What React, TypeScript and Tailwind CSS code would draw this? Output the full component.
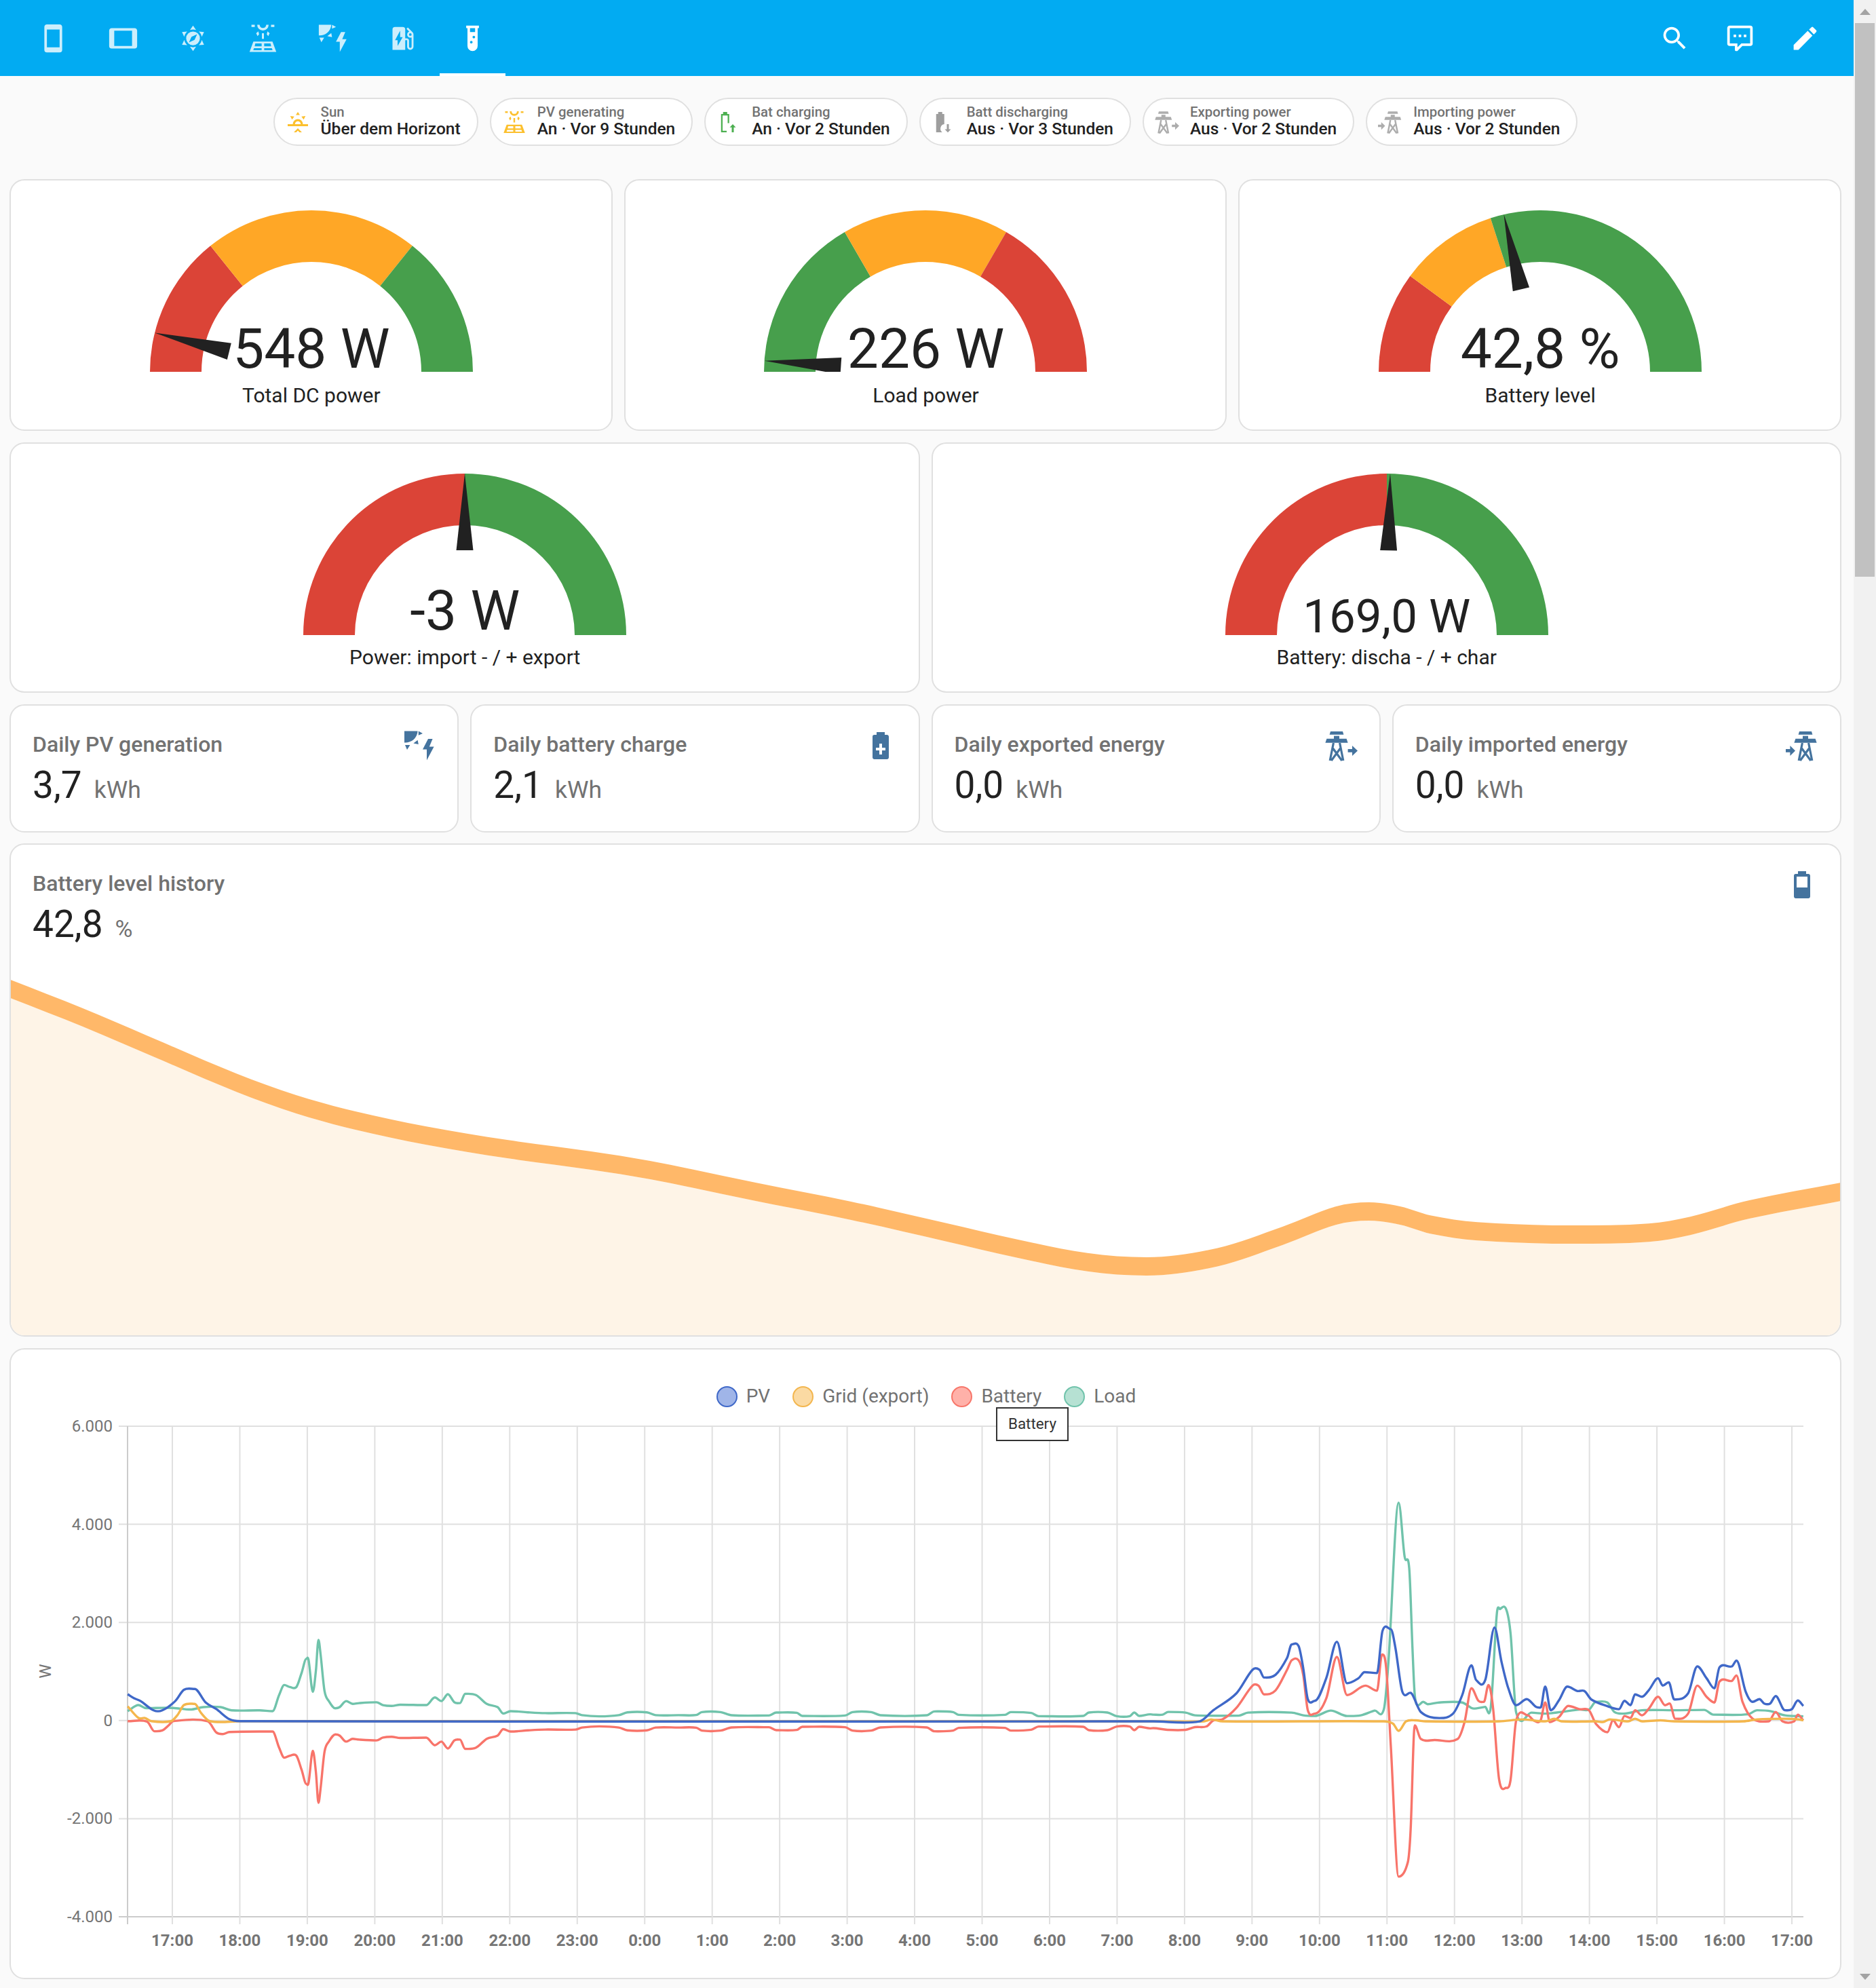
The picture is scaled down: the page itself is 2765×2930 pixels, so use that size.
import type { ReactNode } from 'react';

type Pt = number[];

const SUN_RAYS =
  'M12 2L14.39 5.42C13.65 5.15 12.84 5 12 5S10.35 5.15 9.61 5.42L12 2M3.34 7L7.5 6.65C6.9 7.16 6.36 7.78 5.94 8.5C5.5 9.24 5.25 10 5.11 10.79L3.34 7M3.36 17L5.12 13.23C5.26 14 5.53 14.78 5.95 15.5C6.37 16.24 6.91 16.86 7.5 17.37L3.36 17M20.65 7L18.88 10.79C18.74 10 18.47 9.23 18.05 8.5C17.63 7.78 17.1 7.15 16.5 6.64L20.65 7M20.64 17L16.5 17.36C17.09 16.85 17.62 16.22 18.04 15.5C18.46 14.77 18.73 14 18.87 13.21L20.64 17M12 22L9.59 18.56C10.33 18.83 11.14 19 12 19C12.82 19 13.63 18.83 14.37 18.56L12 22';
const PHONE = 'M17,19H7V5H17M17,1H7C5.89,1 5,1.89 5,3V21A2,2 0 0,0 7,23H17A2,2 0 0,0 19,21V3C19,1.89 18.1,1 17,1Z';
const TABLET = 'M19,18H5V6H19M21,4H3C1.89,4 1,4.89 1,6V18A2,2 0 0,0 3,20H21A2,2 0 0,0 23,18V6C23,4.89 22.1,4 21,4Z';
const COMPASS = `${SUN_RAYS}M12 6.6a5.4 5.4 0 1 0 0 10.8 5.4 5.4 0 0 0 0-10.8zM15.2 8.8L13.2 13.2 8.8 15.2 10.8 10.8z`;
const SOLAR =
  'M4.5 14.5h15L22.5 22.7H1.5zM6 16l-.5 2.2H11V16zM13 16v2.2h5.5L18 16zM5 19.7l-.6 1.6H11v-1.6zM13 19.7v1.6h6.6l-.6-1.6zM7.5 1.3a4.5 4.5 0 0 0 9 0h-1.9a2.6 2.6 0 0 1-5.2 0zM3 1.3h2.6v1.7H3zM18.4 1.3H21v1.7h-2.6zM11.2 8h1.6v4.4h-1.6zM6.7 8l1.7-1.5.6 2.3-1.2 1.5zM17.3 8l-1.7-1.5-.6 2.3 1.2 1.5z';
const SUN_BOLT =
  'M1 1.3h9.8a9 9 0 0 1-9.8 8.4zM11.4 1.3l3.1 1.7-3.1 1.4zM1.5 11.5h3.7L3 15zM10.8 7.9l.6 3.1-3.7-.8zM18.5 7L14.5 14.7h3v8L22.8 12.7h-3.4l2.4-5.7z';
const EV =
  'M19.77,7.23L19.78,7.22L16.06,3.5L15,4.56L17.11,6.67C16.17,7.03 15.5,7.93 15.5,9A2.5,2.5 0 0,0 18,11.5C18.36,11.5 18.69,11.42 19,11.29V18.5A1,1 0 0,1 18,19.5A1,1 0 0,1 17,18.5V14A2,2 0 0,0 15,12H14V5A2,2 0 0,0 12,3H6A2,2 0 0,0 4,5V21H14V13.5H15.5V18.5A2.5,2.5 0 0,0 18,21A2.5,2.5 0 0,0 20.5,18.5V9C20.5,8.31 20.22,7.68 19.77,7.23M18,10A1,1 0 0,1 17,9A1,1 0 0,1 18,8A1,1 0 0,1 19,9A1,1 0 0,1 18,10M8,18V13.5H6L10,6V11H12L8,18Z';
const TUBE =
  'M7,2V4H8V18A4,4 0 0,0 12,22A4,4 0 0,0 16,18V4H17V2H7M11,16C10.4,16 10,15.6 10,15C10,14.4 10.4,14 11,14C11.6,14 12,14.4 12,15C12,15.6 11.6,16 11,16M13,12C12.4,12 12,11.6 12,11C12,10.4 12.4,10 13,10C13.6,10 14,10.4 14,11C14,11.6 13.6,12 13,12M14,7H10V4H14V7Z';
const SEARCH =
  'M9.5,3A6.5,6.5 0 0,1 16,9.5C16,11.11 15.41,12.59 14.44,13.73L14.71,14H15.5L20.5,19L19,20.5L14,15.5V14.71L13.73,14.44C12.59,15.41 11.11,16 9.5,16A6.5,6.5 0 0,1 3,9.5A6.5,6.5 0 0,1 9.5,3M9.5,5C7,5 5,7 5,9.5C5,12 7,14 9.5,14C12,14 14,12 14,9.5C14,7 12,5 9.5,5Z';
const COMMENT =
  'M9,22A1,1 0 0,1 8,21V18H4A2,2 0 0,1 2,16V4C2,2.89 2.9,2 4,2H20A2,2 0 0,1 22,4V16A2,2 0 0,1 20,18H13.9L10.2,21.71C10,21.9 9.75,22 9.5,22V22H9M10,16V19.08L13.08,16H20V4H4V16H10M17,11H15V9H17V11M13,11H11V9H13V11M9,11H7V9H9V11Z';
const PENCIL =
  'M20.71,7.04C21.1,6.65 21.1,6 20.71,5.63L18.37,3.29C18,2.9 17.35,2.9 16.96,3.29L15.12,5.12L18.87,8.87M3,17.25V21H6.75L17.81,9.93L14.06,6.18L3,17.25Z';
const SUN_UP =
  'M12 2l2 3h-4zM4.5 6l4 .5-2.2 3zM19.5 6l-4 .5 2.2 3zM7 14a5 5 0 0 1 10 0h-2.2a2.8 2.8 0 0 0-5.6 0zM2 14h20v2H2zM12 18l4 4h-2.4L12 20.4 10.4 22H8z';
const BAT_SHELL = 'M16.67 4H15V2H9v2H7.33A1.33 1.33 0 0 0 6 5.33v15.34C6 21.4 6.6 22 7.33 22h9.34c.73 0 1.33-.6 1.33-1.33V5.33C18 4.6 17.4 4 16.67 4z';
const BAT_PLUS = `${BAT_SHELL}M11 10.5h2v3h2.5v2H13v3h-2v-3H8.5v-2H11z`;
const BAT_40 = `${BAT_SHELL}M8 6h8v8H8z`;
const BAT_CHARGE = 'M6.5 2h4v2h2v9h-1.5V5.5H6V20.5h4V22H4.5V4h2zM16 14l3 3.2h-2V22h-2v-4.8h-2z';
const BAT_DISCHARGE = 'M6.5 2h4v2h2v10a4.5 4.5 0 0 0-2 8H4.5V4h2zM15 14h2v5h2l-3 3.2-3-3.2h2z';

function Icon({ d, className }: { d: string; className: string }) {
  return (
    <svg viewBox="0 0 24 24" className={className} fill="currentColor" fillRule="evenodd">
      <path d={d} />
    </svg>
  );
}

function Tower({ importing, className }: { importing?: boolean; className: string }) {
  const dx = importing ? 4 : -2;
  return (
    <svg viewBox="0 0 24 24" className={className} fill="currentColor">
      <g transform={`translate(${dx} 0)`}>
        <path d="M6 1.5h9l.7 2.4H5.3z" />
        <path d="M8.5 4.8h4v3h-4z" />
        <path d="M3.2 6.9h14.6l1 3H2.2z" />
        <path d="M8.2 10L5.6 23M12.8 10l2.6 13M7.8 14l6.6 9M13.2 14L6.6 23" fill="none" stroke="currentColor" strokeWidth="1.6" />
      </g>
      {importing ? (
        <path d="M0 14.5h3.2v-2.5L7 15.7l-3.8 3.8v-2.6H0z" />
      ) : (
        <path d="M16.8 14.5H20V12l4 3.7-4 3.8v-2.6h-3.2z" />
      )}
    </svg>
  );
}

const tabs = [PHONE, TABLET, COMPASS, SOLAR, SUN_BOLT, EV, TUBE];

function Header() {
  return (
    <header className="flex h-[112px] items-center justify-between bg-[#02abf2] pl-[27px] pr-[24px] text-white">
      <div className="flex h-full">
        {tabs.map((d, i) => (
          <div key={i} className={`relative flex h-full w-[103px] items-center justify-center ${i === 6 ? 'text-white' : 'text-white/80'}`}>
            <Icon d={d} className="h-[45px] w-[45px]" />
            {i === 6 && <span className="absolute inset-x-[3px] bottom-0 h-1 bg-white" />}
          </div>
        ))}
      </div>
      <div className="flex">
        {[SEARCH, COMMENT, PENCIL].map((d) => (
          <div key={d} className="flex w-[96px] justify-center">
            <Icon d={d} className="h-[45px] w-[45px]" />
          </div>
        ))}
      </div>
    </header>
  );
}

function Chip({ icon, label, value }: { icon: ReactNode; label: string; value: string }) {
  return (
    <div className="flex h-[71px] items-center gap-[16px] rounded-full border-2 border-[#e0e0e0] bg-white pl-[16px] pr-[24px]">
      {icon}
      <div className="flex flex-col pb-[4px]">
        <span className="text-[20.4px] leading-[24px] font-medium text-[#727272]">{label}</span>
        <span className="text-[24.5px] leading-[26px] font-medium text-[#212121]">{value}</span>
      </div>
    </div>
  );
}

function ChipRow() {
  const ic = 'h-[36px] w-[36px] shrink-0';
  return (
    <div className="mb-[49px] flex justify-center gap-[17px]">
      <Chip icon={<Icon d={SUN_UP} className={`${ic} text-[#fcc02e]`} />} label="Sun" value="Über dem Horizont" />
      <Chip icon={<Icon d={SOLAR} className={`${ic} text-[#fcc02e]`} />} label="PV generating" value="An · Vor 9 Stunden" />
      <Chip icon={<Icon d={BAT_CHARGE} className={`${ic} text-[#4caf50]`} />} label="Bat charging" value="An · Vor 2 Stunden" />
      <Chip icon={<Icon d={BAT_DISCHARGE} className={`${ic} text-[#9e9e9e]`} />} label="Batt discharging" value="Aus · Vor 3 Stunden" />
      <Chip icon={<Tower className={`${ic} text-[#adadad]`} />} label="Exporting power" value="Aus · Vor 2 Stunden" />
      <Chip icon={<Tower importing className={`${ic} text-[#adadad]`} />} label="Importing power" value="Aus · Vor 2 Stunden" />
    </div>
  );
}

const RED = '#db4437';
const ORANGE = '#ffa726';
const GREEN = '#479f4c';

function polar(r: number, a: number): Pt {
  const t = (a * Math.PI) / 180;
  return [-r * Math.cos(t), -r * Math.sin(t)];
}

function sector(a0: number, a1: number) {
  const R = 238;
  const r = 162;
  const [x0, y0] = polar(R, a0);
  const [x1, y1] = polar(R, a1);
  const [x2, y2] = polar(r, a1);
  const [x3, y3] = polar(r, a0);
  return `M${x0} ${y0}A${R} ${R} 0 0 1 ${x1} ${y1}L${x2} ${y2}A${r} ${r} 0 0 0 ${x3} ${y3}Z`;
}

type GaugeProps = {
  value: string;
  label: string;
  angle: number;
  stops: [string, number, number][];
  textClass?: string;
  labelClass?: string;
};

function Gauge({ value, label, angle, stops, textClass = 'bottom-[-7px] text-[82px]', labelClass = 'mt-[17px]' }: GaugeProps) {
  const tip = polar(238, angle);
  const b1 = polar(125.5, angle - 5.7);
  const b2 = polar(125.5, angle + 5.7);
  return (
    <div className="flex h-full flex-col items-center rounded-[22px] border-2 border-[#e0e0e0] bg-white pl-[1px] pt-[44px]">
      <div className="relative h-[238px] w-[476px]">
        <svg viewBox="-238 -238 476 238" className="block h-[238px] w-[476px]">
          {stops.map(([c, a0, a1]) => (
            <path key={c + a0} d={sector(a0, a1)} fill={c} />
          ))}
          <polygon points={`${tip} ${b1} ${b2}`} fill="#212121" />
        </svg>
        <div className={`absolute inset-x-0 text-center leading-[82px] text-[#212121] ${textClass}`}>{value}</div>
      </div>
      <div className={`text-[30px] leading-[36px] text-[#212121] ${labelClass}`}>{label}</div>
    </div>
  );
}

function StatHead({ title, value, unit, icon }: { title: string; value: string; unit: string; icon: ReactNode }) {
  return (
    <div className="flex items-start justify-between pl-[32px] pr-[32px] pt-[39px]">
      <div>
        <div className="text-[32px] leading-[36px] font-medium text-[#727272]">{title}</div>
        <div className="mt-[12px] flex items-baseline gap-[18px] leading-[60px]">
          <span className="text-[55px] text-[#212121]">{value}</span>
          <span className="text-[35.5px] text-[#727272]">{unit}</span>
        </div>
      </div>
      {icon}
    </div>
  );
}

function StatCard(props: { title: string; value: string; unit: string; icon: ReactNode }) {
  return (
    <div className="h-full rounded-[22px] border-2 border-[#e0e0e0] bg-white">
      <StatHead {...props} />
    </div>
  );
}

// monotone cubic through the points, no overshoot at peaks
function smooth(p: Pt[]) {
  const slopes = p.map((b, i) => {
    const a = p[Math.max(i - 1, 0)];
    const c = p[Math.min(i + 1, p.length - 1)];
    const s0 = (b[1] - a[1]) / (b[0] - a[0] || 1);
    const s1 = (c[1] - b[1]) / (c[0] - b[0] || 1);
    if (s0 * s1 < 0) return 0;
    return (c[1] - a[1]) / (c[0] - a[0]);
  });
  let d = `M${p[0][0]} ${p[0][1]}`;
  for (let i = 0; i < p.length - 1; i++) {
    const [x0, y0] = p[i];
    const [x1, y1] = p[i + 1];
    const h = (x1 - x0) / 3;
    d += `C${x0 + h} ${y0 + slopes[i] * h} ${x1 - h} ${y1 - slopes[i + 1] * h} ${x1} ${y1}`;
  }
  return d;
}

// battery history outline, top edge
const historyTop: Pt[] = [
  [8, 115], [70, 230], [130, 350], [200, 490], [250, 575], [300, 640], [360, 700], [430, 755], [500, 800], [550, 838],
  [640, 925], [720, 1000], [800, 1085], [860, 1150], [920, 1205], [970, 1222], [1030, 1185], [1085, 1100], [1130, 1020],
  [1158, 1003], [1185, 1020], [1210, 1055], [1250, 1082], [1330, 1095], [1395, 1087], [1430, 1060], [1480, 995], [1557, 925],
].map(([x, y]) => [x / 0.574, 1400 + y / 2.703]);

function HistoryChart() {
  const bottom: Pt[] = historyTop.map(([x, y]) => [x, y + 27]);
  const first = historyTop[0];
  const last = bottom[bottom.length - 1];
  return (
    <svg viewBox="16 1407 2696 560" className="mt-auto block h-[560px] w-full">
      <path d={`${smooth(bottom)}L${last[0]} 1967L${first[0]} 1967Z`} fill="#fef4e7" />
      <path d={`${smooth(historyTop)}L${last[0]} ${last[1]}${smooth([...bottom].reverse()).replace(/^M[^C]+/, '')}Z`} fill="#ffb869" />
    </svg>
  );
}

const z7 = (p: Pt[]) => p.map(([x, y]) => [x / 1.568, 2000 + y / 1.686]);
const z8 = (p: Pt[]) => p.map(([x, y]) => [1700 + x / 1.472, 2150 + y / 2.01]);
const z11 = (p: Pt[]) => p.map(([x, y]) => [900 + x / 1.823, 2460 + y / 3]);

const loadLine: Pt[] = [
  ...z7([[295, 880], [320, 865], [335, 872], [360, 872], [400, 872], [440, 876], [470, 870], [510, 870], [535, 878], [600, 878], [630, 880], [645, 840], [657, 815], [670, 820], [685, 820], [697, 785], [708, 750], [713, 752], [723, 832], [730, 780], [736, 703], [741, 740], [750, 830], [760, 855], [775, 873], [785, 870], [800, 855], [815, 862], [830, 860], [870, 858], [885, 865], [905, 867], [925, 864], [985, 865], [1005, 846], [1020, 855], [1035, 838], [1050, 858], [1063, 860], [1075, 837], [1100, 840], [1125, 862], [1150, 870], [1163, 886], [1180, 880], [1220, 883], [1260, 885], [1330, 885], [1345, 890], [1385, 893], [1430, 890], [1450, 883], [1495, 883], [1515, 890], [1568, 890]]),
  ...z11([[230, 203], [245, 190], [295, 190], [325, 204], [425, 205], [445, 192], [500, 193], [515, 207], [630, 205], [650, 190], [700, 190], [725, 204], [850, 204], [870, 187], [920, 190], [935, 202], [1060, 202], [1075, 190], [1130, 194], [1150, 208], [1270, 207], [1285, 192], [1335, 192], [1360, 208], [1395, 208], [1407, 192], [1420, 207], [1450, 200]]),
  ...z8([[0, 758], [20, 758], [32, 750], [70, 752], [90, 760], [185, 761], [205, 752], [300, 752], [325, 760], [350, 762], [385, 746], [420, 762], [450, 760], [480, 746], [500, 742], [510, 600], [532, 130], [545, 290], [555, 325], [562, 560], [567, 700], [575, 730], [585, 720], [595, 727], [620, 722], [670, 722], [695, 740], [720, 735], [732, 735], [745, 460], [752, 445], [765, 445], [775, 520], [787, 752], [820, 752], [850, 755], [885, 750], [925, 743], [945, 743], [960, 720], [985, 722], [1000, 750], [1020, 755], [1060, 745], [1130, 745], [1195, 744], [1215, 758], [1290, 757], [1310, 745], [1340, 748], [1370, 760], [1410, 763]]),
];

const batteryLine: Pt[] = [
  ...z7([[295, 905], [340, 906], [357, 930], [375, 928], [390, 915], [400, 905], [480, 905], [500, 933], [515, 937], [530, 932]]),
  ...loadLine.filter(([x]) => x >= 400 && x < 1700).map(([x, y]) => [x, 2 * 2537 - y]),
  ...z8([[0, 798], [30, 803], [70, 803], [90, 795], [115, 793], [130, 775], [150, 772], [180, 738], [215, 672], [228, 672], [240, 698], [265, 686], [290, 625], [300, 597], [315, 597], [325, 640], [335, 745], [350, 755], [375, 710], [398, 587], [420, 700], [460, 672], [485, 687], [496, 580], [505, 620], [515, 850], [532, 1238], [552, 1195], [558, 1100], [567, 790], [580, 830], [610, 833], [660, 830], [675, 780], [690, 680], [705, 717], [717, 720], [727, 670], [737, 740], [750, 950], [765, 975], [775, 950], [787, 775], [812, 760], [825, 775], [840, 775], [850, 722], [860, 780], [880, 765], [900, 732], [925, 742], [945, 745], [960, 785], [985, 810], [997, 775], [1010, 795], [1022, 762], [1035, 768], [1045, 745], [1060, 760], [1075, 740], [1095, 705], [1110, 730], [1120, 725], [1132, 770], [1160, 755], [1180, 672], [1200, 705], [1217, 722], [1228, 660], [1255, 658], [1265, 642], [1278, 720], [1300, 770], [1335, 778], [1350, 750], [1365, 778], [1390, 778], [1398, 758], [1410, 775]]),
];

const gridLine: Pt[] = [
  ...z7([[295, 868], [320, 897], [335, 897], [350, 905], [395, 905], [410, 890], [425, 865], [450, 862], [465, 885], [485, 905], [555, 905]]),
  ...z8([[0, 778], [110, 778], [125, 772], [150, 778], [500, 778], [520, 785], [532, 806], [548, 778], [570, 775], [590, 778], [750, 778], [800, 772], [850, 778], [870, 770], [885, 778], [960, 778], [975, 780], [990, 772], [1030, 778], [1045, 770], [1060, 778], [1100, 775], [1130, 778], [1280, 778], [1310, 772], [1370, 770], [1400, 772], [1410, 775]]),
];

const pvLine: Pt[] = [
  ...z7([[295, 838], [310, 848], [325, 855], [355, 878], [375, 878], [405, 855], [425, 827], [450, 825], [475, 858], [500, 875], [530, 900], [555, 905]]),
  ...z8([[0, 778], [100, 778], [130, 745], [180, 695], [215, 625], [230, 625], [240, 648], [265, 640], [290, 590], [300, 550], [315, 555], [325, 620], [335, 712], [350, 717], [375, 650], [398, 542], [420, 665], [445, 650], [458, 632], [485, 635], [497, 510], [515, 505], [525, 560], [540, 690], [560, 695], [580, 750], [620, 768], [650, 755], [670, 700], [690, 612], [700, 655], [720, 655], [740, 500], [755, 600], [770, 680], [787, 730], [810, 712], [830, 735], [840, 737], [850, 675], [862, 745], [880, 715], [898, 675], [920, 688], [935, 688], [950, 713], [985, 733], [1010, 742], [1022, 717], [1035, 730], [1045, 698], [1060, 705], [1075, 685], [1095, 650], [1105, 672], [1118, 662], [1130, 713], [1160, 695], [1180, 615], [1200, 650], [1217, 680], [1228, 618], [1255, 615], [1265, 598], [1285, 690], [1300, 720], [1315, 712], [1325, 725], [1338, 725], [1350, 703], [1370, 745], [1385, 742], [1398, 716], [1410, 732]]),
];

const legend = [
  { name: 'PV', fill: '#a0b5e8', stroke: '#3f68c8' },
  { name: 'Grid (export)', fill: '#fbdaa3', stroke: '#f3b64e' },
  { name: 'Battery', fill: '#ffb1a9', stroke: '#f7766a' },
  { name: 'Load', fill: '#b6e1d3', stroke: '#70c3ab' },
];

const hours = ['17:00', '18:00', '19:00', '20:00', '21:00', '22:00', '23:00', '0:00', '1:00', '2:00', '3:00', '4:00', '5:00', '6:00', '7:00', '8:00', '9:00', '10:00', '11:00', '12:00', '13:00', '14:00', '15:00', '16:00', '17:00'];
const yTicks = ['6.000', '4.000', '2.000', '0', '-2.000', '-4.000'];

function PowerChart() {
  return (
    <svg viewBox="16 2080 2696 833" className="block h-[833px] w-full font-['Roboto']">
      {yTicks.map((t, i) => {
        const y = 2102 + i * 144.6;
        return (
          <g key={t}>
            <line x1="175" x2="2658" y1={y} y2={y} stroke={i === 5 ? '#cccccc' : '#e0e0e0'} strokeWidth="2" />
            <text x="166" y={y + 8} textAnchor="end" fontSize="24" fill="#757575">{t}</text>
          </g>
        );
      })}
      <line x1="188" x2="188" y1="2102" y2="2836" stroke="#cccccc" strokeWidth="2" />
      {hours.map((h, i) => {
        const x = 254 + i * 99.46;
        return (
          <g key={i}>
            <line x1={x} x2={x} y1="2102" y2="2836" stroke="#e0e0e0" strokeWidth="2" />
            <text x={x} y="2868" textAnchor="middle" fontSize="24" fontWeight="700" fill="#757575">{h}</text>
          </g>
        );
      })}
      <text x="0" y="0" transform="translate(75 2463) rotate(-90)" textAnchor="middle" fontSize="24" fill="#757575">W</text>
      <g fill="none" strokeWidth="3.4" strokeLinejoin="round">
        <path d={smooth(loadLine)} stroke="#70c3ab" />
        <path d={smooth(batteryLine)} stroke="#f8746a" />
        <path d={smooth(gridLine)} stroke="#f4b64c" />
        <path d={smooth(pvLine)} stroke="#3f68c8" />
      </g>
    </svg>
  );
}

function Scrollbar() {
  return (
    <div className="flex h-full w-[33px] flex-col bg-[#f1f1f1]">
      <div className="flex h-[34px] items-center justify-center">
        <svg viewBox="0 0 16 9" className="h-[9px] w-[16px]"><path d="M8 0l8 9H0z" fill="#a3a3a3" /></svg>
      </div>
      <div className="mx-[2px] h-[816px] bg-[#c1c1c1]" />
      <div className="mt-auto flex h-[34px] items-center justify-center">
        <svg viewBox="0 0 16 9" className="h-[9px] w-[16px]"><path d="M8 9l8-9H0z" fill="#a3a3a3" /></svg>
      </div>
    </div>
  );
}

const statIcon = 'mt-[-4px] h-[48px] w-[48px] shrink-0 text-[#44739e]';

export default function App() {
  return (
    <div className="flex h-[2930px] w-[2765px] overflow-hidden bg-[#fafafa] font-['Roboto',sans-serif]">
      <div className="flex w-[2732px] flex-col">
        <Header />
        <main className="pl-[14px] pr-[18px] pt-[32px]">
          <ChipRow />
          <div className="mb-[17px] grid h-[371px] grid-cols-3 gap-[17px]">
            <Gauge value="548 W" label="Total DC power" angle={14} stops={[[RED, 0, 51.3], [ORANGE, 51.3, 128.7], [GREEN, 128.7, 180]]} />
            <Gauge value="226 W" label="Load power" angle={3.9} stops={[[GREEN, 0, 60], [ORANGE, 60, 120], [RED, 120, 180]]} />
            <Gauge value="42,8 %" label="Battery level" angle={77} stops={[[RED, 0, 36.4], [ORANGE, 36.4, 72.1], [GREEN, 72.1, 180]]} />
          </div>
          <div className="mb-[17px] grid h-[369px] grid-cols-2 gap-[17px]">
            <Gauge value="-3 W" label="Power: import - / + export" angle={90} stops={[[RED, 0, 90], [GREEN, 90, 180]]} textClass="bottom-[-5px] text-[82px]" labelClass="mt-[15px]" />
            <Gauge value="169,0 W" label="Battery: discha - / + char" angle={91.2} stops={[[RED, 0, 90], [GREEN, 90, 180]]} textClass="bottom-[-14px] text-[69px]" labelClass="mt-[15px]" />
          </div>
          <div className="mb-[16px] grid h-[189px] grid-cols-4 gap-[17px]">
            <StatCard title="Daily PV generation" value="3,7" unit="kWh" icon={<Icon d={SUN_BOLT} className={statIcon} />} />
            <StatCard title="Daily battery charge" value="2,1" unit="kWh" icon={<Icon d={BAT_PLUS} className={statIcon} />} />
            <StatCard title="Daily exported energy" value="0,0" unit="kWh" icon={<Tower className={statIcon} />} />
            <StatCard title="Daily imported energy" value="0,0" unit="kWh" icon={<Tower importing className={statIcon} />} />
          </div>
          <div className="mb-[17px] flex h-[727px] flex-col overflow-hidden rounded-[22px] border-2 border-[#e0e0e0] bg-white">
            <StatHead title="Battery level history" value="42,8" unit="%" icon={<Icon d={BAT_40} className={statIcon} />} />
            <HistoryChart />
          </div>
          <div className="relative h-[930px] overflow-hidden rounded-[22px] border-2 border-[#e0e0e0] bg-white">
            <div className="flex h-[91px] items-start justify-center gap-[33px] pl-[2px] pt-[53px]">
              {legend.map((l) => (
                <div key={l.name} className="flex items-center gap-[13px]">
                  <span className="h-[31px] w-[31px] rounded-full border-2" style={{ backgroundColor: l.fill, borderColor: l.stroke }} />
                  <span className="text-[28px] leading-[32px] text-[#727272]">{l.name}</span>
                </div>
              ))}
            </div>
            <PowerChart />
            <div className="absolute left-[1452px] top-[85px] flex h-[50px] w-[107px] items-center justify-center border-2 border-[#333333] bg-white text-[22.4px] text-[#333333]">
              Battery
            </div>
          </div>
        </main>
      </div>
      <Scrollbar />
    </div>
  );
}
